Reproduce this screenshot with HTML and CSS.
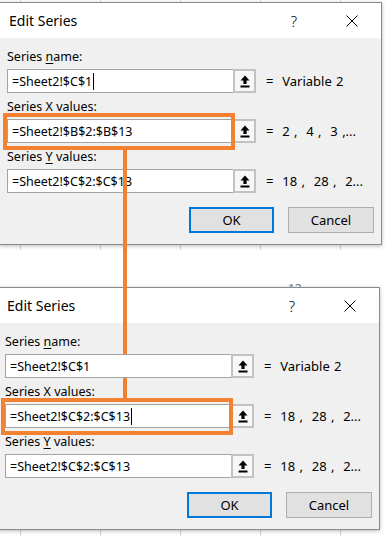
FILE: index.html
```html
<!DOCTYPE html>
<html>
<head>
<meta charset="utf-8">
<link rel="stylesheet" href="styles.css">
</head>
<body>
<div class="page">
  <span class="sheet-num">12</span>

  <section class="dialog d1">
    <header class="titlebar">
      <span class="title">Edit Series</span>
      <span class="tb-btn help">?</span>
      <span class="tb-btn close"><svg width="12" height="12" viewBox="0 0 12 12"><path d="M0.5 0.5 L11.5 11.5 M11.5 0.5 L0.5 11.5" stroke="#000" stroke-width="1" fill="none"/></svg></span>
    </header>
    <div class="body">
      <div class="label">Series <u>n</u>ame:</div>
      <div class="row">
        <div class="input">=Sheet2!$C$1<span class="caret"></span></div>
        <span class="ref"><svg width="10" height="13" viewBox="0 0 10 13"><path d="M5 0.5 L9.5 5.5 H6.6 V9 H3.4 V5.5 H0.5 Z" fill="#000"/><rect x="0.5" y="10.5" width="9" height="2" fill="#000"/></svg></span>
        <span class="value">=  Variable 2</span>
      </div>
      <div class="label">Series <u>X</u> values:</div>
      <div class="row">
        <div class="input">=Sheet2!$B$2:$B$13</div>
        <span class="ref"><svg width="10" height="13" viewBox="0 0 10 13"><path d="M5 0.5 L9.5 5.5 H6.6 V9 H3.4 V5.5 H0.5 Z" fill="#000"/><rect x="0.5" y="10.5" width="9" height="2" fill="#000"/></svg></span>
        <span class="value">=  2 ,  4 ,  3 ,...</span>
        <span class="hl-box"></span>
      </div>
      <div class="label">Series <u>Y</u> values:</div>
      <div class="row">
        <div class="input">=Sheet2!$C$2:$C$13</div>
        <span class="ref"><svg width="10" height="13" viewBox="0 0 10 13"><path d="M5 0.5 L9.5 5.5 H6.6 V9 H3.4 V5.5 H0.5 Z" fill="#000"/><rect x="0.5" y="10.5" width="9" height="2" fill="#000"/></svg></span>
        <span class="value">=  18 ,  28 ,  2...</span>
      </div>
      <div class="actions">
        <button class="btn ok">OK</button>
        <button class="btn">Cancel</button>
      </div>
    </div>
  </section>

  <section class="dialog d2">
    <header class="titlebar">
      <span class="title">Edit Series</span>
      <span class="tb-btn help">?</span>
      <span class="tb-btn close"><svg width="12" height="12" viewBox="0 0 12 12"><path d="M0.5 0.5 L11.5 11.5 M11.5 0.5 L0.5 11.5" stroke="#000" stroke-width="1" fill="none"/></svg></span>
    </header>
    <div class="body">
      <div class="label">Series <u>n</u>ame:</div>
      <div class="row front">
        <div class="input">=Sheet2!$C$1</div>
        <span class="ref"><svg width="10" height="13" viewBox="0 0 10 13"><path d="M5 0.5 L9.5 5.5 H6.6 V9 H3.4 V5.5 H0.5 Z" fill="#000"/><rect x="0.5" y="10.5" width="9" height="2" fill="#000"/></svg></span>
        <span class="value">=  Variable 2</span>
      </div>
      <div class="label">Series X values:</div>
      <div class="row">
        <div class="input">=Sheet2!$C$2:$C$13<span class="caret"></span></div>
        <span class="ref"><svg width="10" height="13" viewBox="0 0 10 13"><path d="M5 0.5 L9.5 5.5 H6.6 V9 H3.4 V5.5 H0.5 Z" fill="#000"/><rect x="0.5" y="10.5" width="9" height="2" fill="#000"/></svg></span>
        <span class="value">=  18 ,  28 ,  2...</span>
        <span class="hl-box"></span>
      </div>
      <div class="label">Series <u>Y</u> values:</div>
      <div class="row">
        <div class="input">=Sheet2!$C$2:$C$13</div>
        <span class="ref"><svg width="10" height="13" viewBox="0 0 10 13"><path d="M5 0.5 L9.5 5.5 H6.6 V9 H3.4 V5.5 H0.5 Z" fill="#000"/><rect x="0.5" y="10.5" width="9" height="2" fill="#000"/></svg></span>
        <span class="value">=  18 ,  28 ,  2...</span>
      </div>
      <div class="actions">
        <button class="btn ok">OK</button>
        <button class="btn">Cancel</button>
      </div>
    </div>
  </section>

  <span class="connector seg1"></span>
  <span class="connector seg2"></span>
</div>
</body>
</html>
```

FILE: styles.css
```css
html, body {
  margin: 0;
  padding: 0;
  background: #fff;
}

body {
  font-family: "Noto Sans", "Open Sans", sans-serif;
  color: #000;
}

.page {
  position: relative;
  width: 385px;
  height: 536px;
  overflow: hidden;
  display: flex;
  flex-direction: column;
  background:
    linear-gradient(#fff, #fff) 0 250px / 100% 37px no-repeat,
    repeating-linear-gradient(to right, transparent 0 20px, #d6d6d6 20px 21px, transparent 21px 80px);
}

.sheet-num {
  position: absolute;
  left: 288px;
  top: 280px;
  font-size: 12px;
  color: #7a7a7a;
}

.dialog {
  box-sizing: border-box;
  width: 383px;
  height: 243px;
  flex: none;
  border: 1px solid #8a8a8a;
  background: #f0f0f0;
  box-shadow: 0 1px 4px rgba(0, 0, 0, 0.28);
  display: flex;
  flex-direction: column;
  position: relative;
  z-index: 1;
}

.d1 {
  margin: 2px 0 0 -1px;
}

.d2 {
  margin: 42px 0 0 -3px;
}

.titlebar {
  height: 35px;
  flex: none;
  background: #fff;
  display: flex;
  align-items: center;
  padding-left: 9px;
  font-size: 14px;
}

.title {
  flex: 1;
}

.tb-btn {
  width: 58px;
  display: flex;
  justify-content: center;
  align-items: center;
}

.help {
  font-size: 15px;
  font-weight: 300;
}

.body {
  padding: 10px 7px 0 7px;
  display: flex;
  flex-direction: column;
  font-size: 12.5px;
}

.label {
  height: 18px;
  line-height: 18px;
  margin-bottom: 3px;
}

.label u {
  text-underline-offset: 2px;
}

.row {
  position: relative;
  display: flex;
  align-items: center;
  height: 24px;
}

.row + .label {
  margin-top: 5px;
}

.input {
  box-sizing: border-box;
  width: 227px;
  height: 24px;
  border: 1px solid #a3a3a3;
  background: #fff;
  padding-left: 4px;
  display: flex;
  align-items: center;
  white-space: pre;
}

.caret {
  display: inline-block;
  width: 1px;
  height: 17px;
  background: #000;
  margin-left: 1px;
}

.ref {
  box-sizing: border-box;
  width: 23px;
  height: 24px;
  margin-left: -1px;
  border: 2px solid #c2c2c2;
  background: #f7f7f7;
  display: flex;
  justify-content: center;
  align-items: center;
}

.value {
  margin-left: 10px;
  white-space: pre;
  font-size: 13px;
  word-spacing: 1px;
}

.hl-box {
  position: absolute;
  box-sizing: border-box;
  left: -4px;
  top: -6px;
  width: 232px;
  height: 37px;
  border: 4px solid #f28131;
  z-index: 2;
}

.front {
  z-index: 6;
}

.actions {
  display: flex;
  justify-content: flex-end;
  gap: 14px;
  margin-top: 14px;
}

.btn {
  box-sizing: border-box;
  width: 86px;
  height: 26px;
  background: #e1e1e1;
  border: 1px solid #adadad;
  font-family: inherit;
  font-size: 13px;
  color: #000;
  padding: 0;
}

.btn.ok {
  width: 85px;
  border: 2px solid #0078d7;
}

.connector {
  position: absolute;
  left: 123px;
  width: 4px;
  background: #f28131;
  z-index: 5;
}

.seg1 {
  top: 148px;
  height: 206px;
}

.seg2 {
  top: 378px;
  height: 22px;
}
```
